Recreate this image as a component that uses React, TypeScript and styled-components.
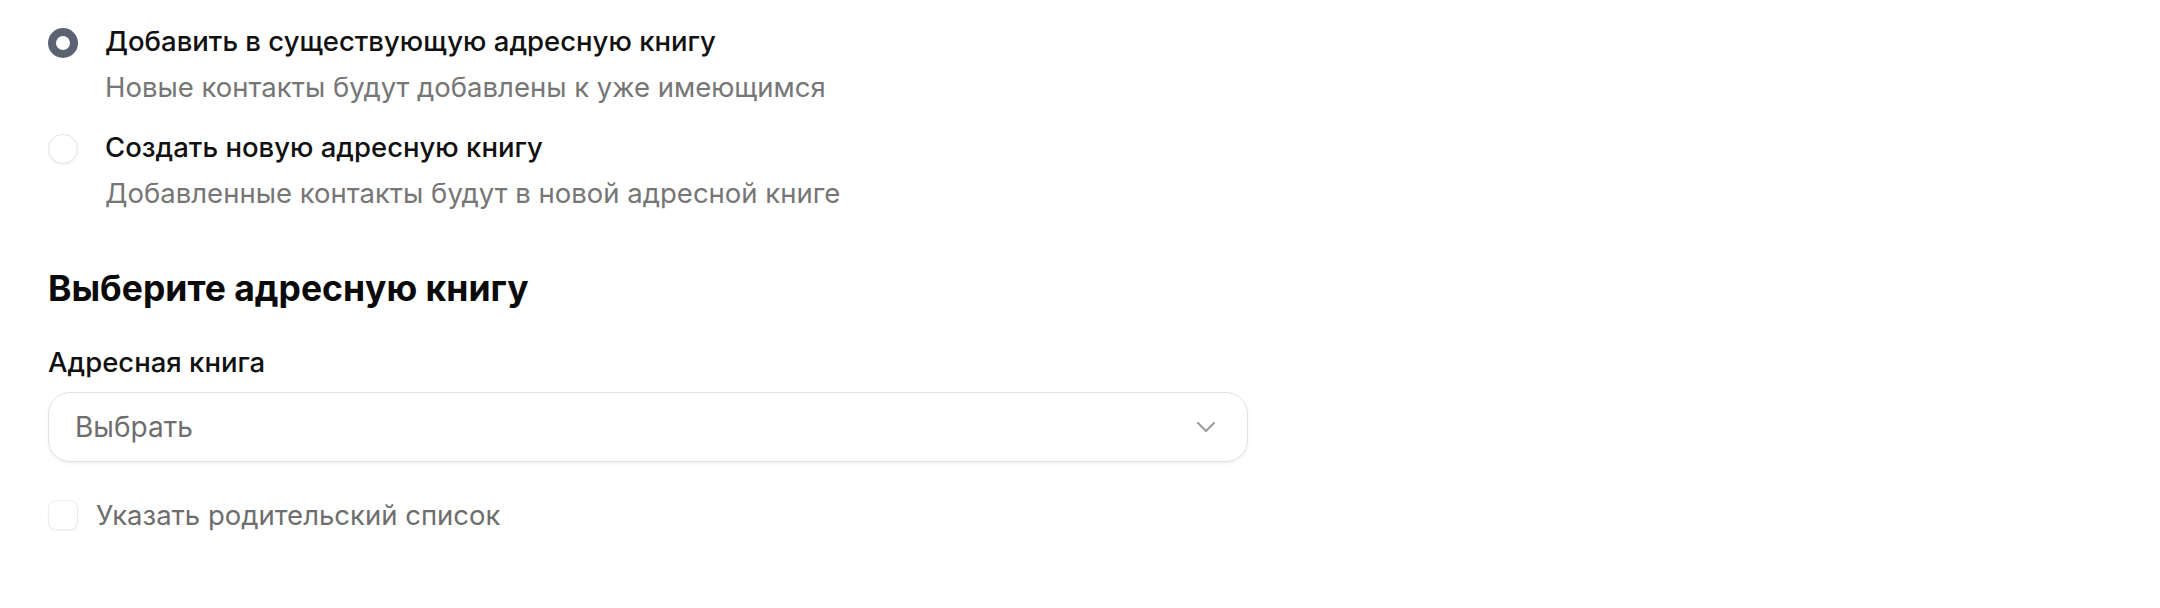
import styled, { createGlobalStyle } from "styled-components";

const GlobalStyle = createGlobalStyle`
	html, body {
		margin: 0;
		padding: 0;
		background: #fff;
	}
	body {
		font-family: Inter, "Noto Sans", "Liberation Sans", sans-serif;
		-webkit-font-smoothing: antialiased;
	}
`;

const Page = styled.div`
	padding: 23px 48px 0 48px;
	width: 1200px;
`;

const RadioGroup = styled.div`
	display: flex;
	flex-direction: column;
	gap: 24px;
`;

const RadioOption = styled.label`
	display: grid;
	grid-template-columns: 30px 1fr;
	column-gap: 27px;
	row-gap: 10px;
	cursor: pointer;
`;

const RadioMark = styled.span<{ $checked?: boolean }>`
	box-sizing: border-box;
	width: 30px;
	height: 30px;
	margin-top: 5px;
	border-radius: 50%;
	background: #fff;
	border: ${(p) => (p.$checked ? "8.5px solid #5b6372" : "1.5px solid #e3e3e3")};
	box-shadow: ${(p) => (p.$checked ? "none" : "0 1px 2px rgba(0, 0, 0, 0.06)")};
`;

const OptionTitle = styled.div`
	font-size: 27.5px;
	line-height: 36px;
	font-weight: 500;
	color: #111;
`;

const OptionHint = styled.div`
	grid-column: 2;
	font-size: 27.5px;
	line-height: 36px;
	color: #767676;
`;

const Heading = styled.h2`
	margin: 57px 0 0;
	font-size: 35.5px;
	line-height: 42px;
	font-weight: 700;
	color: #0a0a0a;
`;

const FieldLabel = styled.div`
	margin-top: 34px;
	font-size: 27.5px;
	line-height: 36px;
	font-weight: 500;
	color: #111;
`;

const SelectBox = styled.div`
	box-sizing: border-box;
	margin-top: 12px;
	height: 70px;
	width: 1200px;
	display: flex;
	align-items: center;
	justify-content: space-between;
	padding: 0 32px 0 26px;
	border: 1.5px solid #e2e2e2;
	border-radius: 22px;
	box-shadow: 0 2px 3px rgba(0, 0, 0, 0.06);
	background: #fff;
	cursor: pointer;
`;

const Placeholder = styled.span`
	font-size: 28px;
	color: #6e6e6e;
`;

const CheckRow = styled.label`
	margin-top: 35px;
	display: flex;
	align-items: center;
	gap: 18px;
	cursor: pointer;
`;

const CheckMark = styled.span`
	box-sizing: border-box;
	width: 30px;
	height: 30px;
	border-radius: 8px;
	border: 1.5px solid #ebebeb;
	box-shadow: 0 1px 2px rgba(0, 0, 0, 0.05);
	background: #fff;
`;

const CheckLabel = styled.span`
	font-size: 27.5px;
	line-height: 36px;
	color: #6e6e6e;
`;

const Chevron = () => (
	<svg width="18" height="10" viewBox="0 0 18 10" fill="none">
		<path d="M1 1l8 8 8-8" stroke="#9a9a9a" strokeWidth="2" strokeLinecap="round" strokeLinejoin="round" />
	</svg>
);

const options = [
	{
		title: "Добавить в существующую адресную книгу",
		hint: "Новые контакты будут добавлены к уже имеющимся",
		checked: true,
	},
	{
		title: "Создать новую адресную книгу",
		hint: "Добавленные контакты будут в новой адресной книге",
		checked: false,
	},
];

export default function App() {
	return (
		<>
			<GlobalStyle />
			<Page>
				<RadioGroup>
					{options.map((o) => (
						<RadioOption key={o.title}>
							<RadioMark $checked={o.checked} />
							<OptionTitle>{o.title}</OptionTitle>
							<OptionHint>{o.hint}</OptionHint>
						</RadioOption>
					))}
				</RadioGroup>
				<Heading>Выберите адресную книгу</Heading>
				<FieldLabel>Адресная книга</FieldLabel>
				<SelectBox>
					<Placeholder>Выбрать</Placeholder>
					<Chevron />
				</SelectBox>
				<CheckRow>
					<CheckMark />
					<CheckLabel>Указать родительский список</CheckLabel>
				</CheckRow>
			</Page>
		</>
	);
}
